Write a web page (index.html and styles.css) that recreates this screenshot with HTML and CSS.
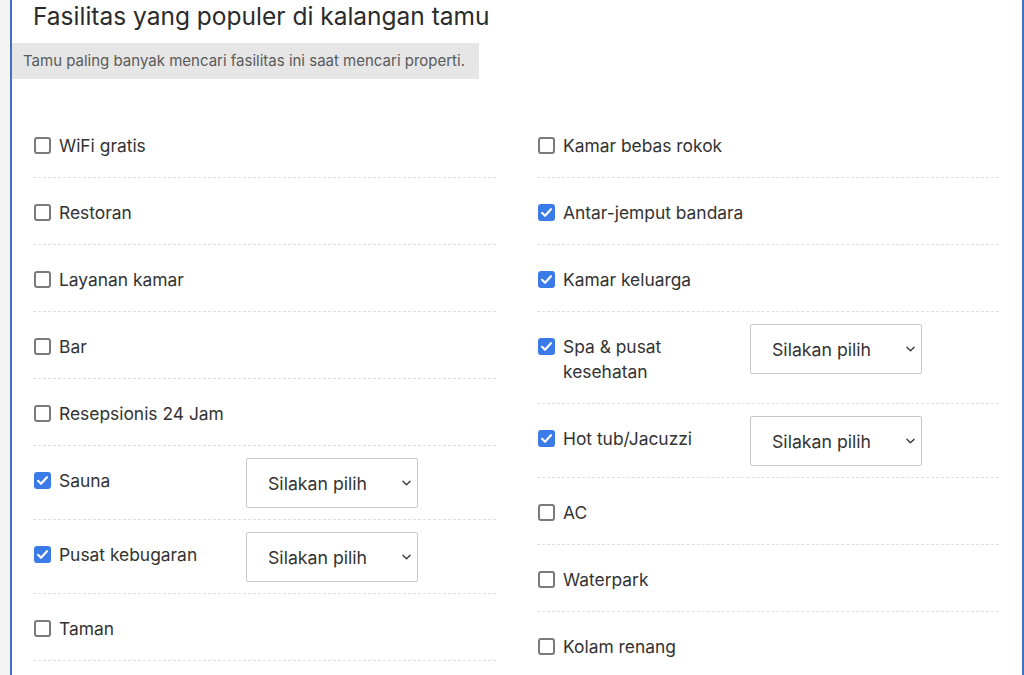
FILE: index.html
```html
<!DOCTYPE html>
<html lang="id">
<head>
<meta charset="utf-8">
<title>Fasilitas</title>
<link rel="stylesheet" href="styles.css">
</head>
<body>
<div class="panel">
  <h2 class="title">Fasilitas yang populer di kalangan tamu</h2>
  <div class="note">Tamu paling banyak mencari fasilitas ini saat mencari properti.</div>
  <div class="cols">
    <div class="col">
      <div class="row"><span class="box"></span><span class="label">WiFi gratis</span></div>
      <div class="row"><span class="box"></span><span class="label">Restoran</span></div>
      <div class="row"><span class="box"></span><span class="label">Layanan kamar</span></div>
      <div class="row"><span class="box"></span><span class="label">Bar</span></div>
      <div class="row"><span class="box"></span><span class="label">Resepsionis 24 Jam</span></div>
      <div class="row sel">
        <div class="item"><span class="box on"><svg viewBox="0 0 16 16"><path d="M3.8 8.3l2.8 2.8 5.6-6.2" fill="none" stroke="#fff" stroke-width="2" stroke-linecap="round" stroke-linejoin="round"/></svg></span><span class="label">Sauna</span></div>
        <div class="select"><span>Silakan pilih</span><svg viewBox="0 0 10 6"><path d="M1 1l4 4 4-4" fill="none" stroke="#333" stroke-width="1.4" stroke-linecap="round" stroke-linejoin="round"/></svg></div>
      </div>
      <div class="row sel">
        <div class="item"><span class="box on"><svg viewBox="0 0 16 16"><path d="M3.8 8.3l2.8 2.8 5.6-6.2" fill="none" stroke="#fff" stroke-width="2" stroke-linecap="round" stroke-linejoin="round"/></svg></span><span class="label">Pusat kebugaran</span></div>
        <div class="select"><span>Silakan pilih</span><svg viewBox="0 0 10 6"><path d="M1 1l4 4 4-4" fill="none" stroke="#333" stroke-width="1.4" stroke-linecap="round" stroke-linejoin="round"/></svg></div>
      </div>
      <div class="row"><span class="box"></span><span class="label">Taman</span></div>
    </div>
    <div class="col">
      <div class="row"><span class="box"></span><span class="label">Kamar bebas rokok</span></div>
      <div class="row"><span class="box on"><svg viewBox="0 0 16 16"><path d="M3.8 8.3l2.8 2.8 5.6-6.2" fill="none" stroke="#fff" stroke-width="2" stroke-linecap="round" stroke-linejoin="round"/></svg></span><span class="label">Antar-jemput bandara</span></div>
      <div class="row"><span class="box on"><svg viewBox="0 0 16 16"><path d="M3.8 8.3l2.8 2.8 5.6-6.2" fill="none" stroke="#fff" stroke-width="2" stroke-linecap="round" stroke-linejoin="round"/></svg></span><span class="label">Kamar keluarga</span></div>
      <div class="row sel">
        <div class="item"><span class="box on"><svg viewBox="0 0 16 16"><path d="M3.8 8.3l2.8 2.8 5.6-6.2" fill="none" stroke="#fff" stroke-width="2" stroke-linecap="round" stroke-linejoin="round"/></svg></span><span class="label">Spa &amp; pusat kesehatan</span></div>
        <div class="select"><span>Silakan pilih</span><svg viewBox="0 0 10 6"><path d="M1 1l4 4 4-4" fill="none" stroke="#333" stroke-width="1.4" stroke-linecap="round" stroke-linejoin="round"/></svg></div>
      </div>
      <div class="row sel">
        <div class="item"><span class="box on"><svg viewBox="0 0 16 16"><path d="M3.8 8.3l2.8 2.8 5.6-6.2" fill="none" stroke="#fff" stroke-width="2" stroke-linecap="round" stroke-linejoin="round"/></svg></span><span class="label">Hot tub/Jacuzzi</span></div>
        <div class="select"><span>Silakan pilih</span><svg viewBox="0 0 10 6"><path d="M1 1l4 4 4-4" fill="none" stroke="#333" stroke-width="1.4" stroke-linecap="round" stroke-linejoin="round"/></svg></div>
      </div>
      <div class="row"><span class="box"></span><span class="label">AC</span></div>
      <div class="row"><span class="box"></span><span class="label">Waterpark</span></div>
      <div class="row"><span class="box"></span><span class="label">Kolam renang</span></div>
    </div>
  </div>
</div>
</body>
</html>
```
FILE: styles.css
```css
html, body {
  margin: 0;
  padding: 0;
}
body {
  background: #f4f4f4;
  font-family: Inter, "Noto Sans", "Liberation Sans", sans-serif;
  color: #333;
  padding-left: 10px;
  overflow: hidden;
  height: 675px;
}
.panel {
  background: #fff;
  border-left: 2px solid #3f72c6;
  border-right: 2px solid #3f72c6;
  padding: 0 23px 0 21px;
  min-height: 800px;
}
.title {
  margin: 0;
  font-size: 24.5px;
  font-weight: 400;
  line-height: 32px;
  color: #2b2b2b;
}
.note {
  margin: 11px 0 0 -21px;
  width: 456px;
  background: #e6e6e6;
  color: #5a5a5a;
  font-size: 15px;
  line-height: 36px;
  padding-left: 11px;
}
.cols {
  display: grid;
  grid-template-columns: 463px 462px;
  column-gap: 41px;
  margin-top: 32px;
}
.row {
  display: flex;
  align-items: flex-start;
  padding: 12px 0 11px;
  border-bottom: 1px dashed #dedede;
}
.row > .box, .item > .box {
  margin-top: 14px;
}
.item {
  display: flex;
  align-items: flex-start;
  width: 200px;
  flex: none;
}
.label {
  font-size: 17.4px;
  line-height: 25px;
  padding: 10px 0 8px;
  margin-left: 8px;
}
.box {
  flex: none;
  width: 17px;
  height: 17px;
  box-sizing: border-box;
  border: 2px solid #7a7a7a;
  border-radius: 3px;
  margin-left: 1px;
  display: flex;
}
.box.on {
  background: #3a7be8;
  border-color: #3a7be8;
}
.box svg {
  width: 17px;
  height: 17px;
  margin: -2px;
  flex: none;
}
.select {
  margin-left: 13px;
  width: 172px;
  height: 50px;
  box-sizing: border-box;
  border: 1px solid #c9c9c9;
  border-radius: 2px;
  display: flex;
  align-items: center;
  justify-content: space-between;
  padding: 0 6px 0 21px;
  font-size: 17.7px;
  color: #333;
}
.select svg {
  width: 9px;
  height: 6px;
}
```
